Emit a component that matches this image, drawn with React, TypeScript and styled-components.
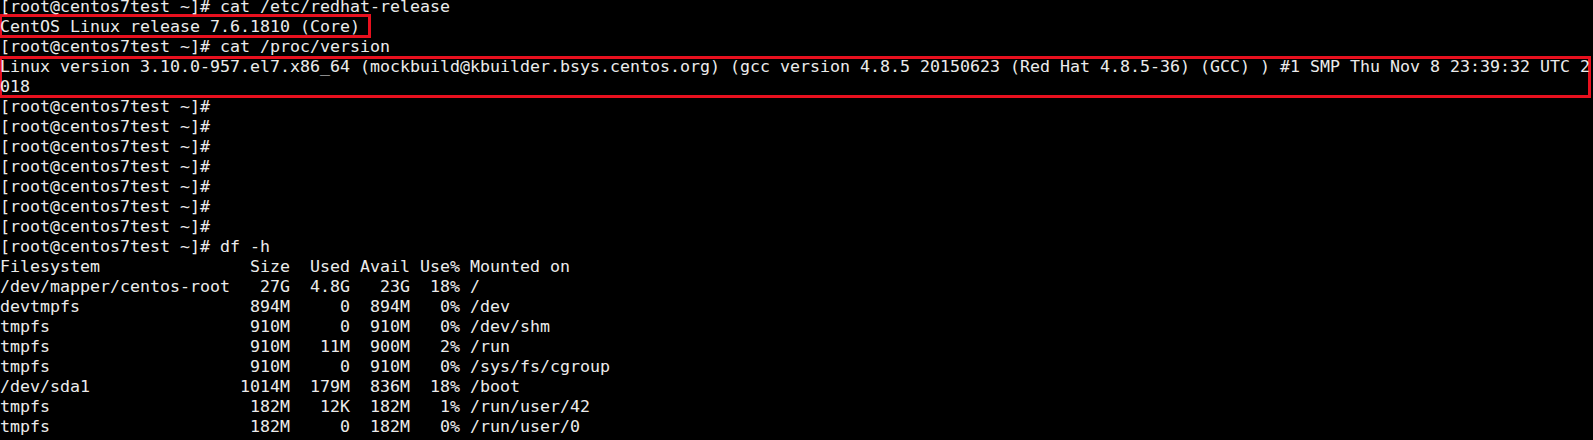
import React from "react";
import styled, { createGlobalStyle } from "styled-components";

const GlobalStyle = createGlobalStyle`
  html, body {
    margin: 0;
    padding: 0;
    background: #000000;
    overflow: hidden;
  }
`;

const Screen = styled.div`
  width: 1593px;
  height: 440px;
  background: #000000;
  overflow: hidden;
`;

const Output = styled.div`
  margin-top: -3px;
  display: flex;
  flex-direction: column;
  font-family: "DejaVu Sans Mono", "Liberation Mono", monospace;
  font-size: 16.61px;
  line-height: 20px;
  color: #ebebeb;
`;

const Line = styled.div`
  position: relative;
  z-index: 1;
  white-space: pre;
  height: 20px;
`;

const Highlight = styled.div<{ $boxWidth: string; $top: number; $bottom: number }>`
  position: relative;
  display: flex;
  flex-direction: column;

  &::after {
    content: "";
    position: absolute;
    z-index: 0;
    left: 0;
    top: ${(p) => p.$top}px;
    bottom: ${(p) => p.$bottom}px;
    width: ${(p) => p.$boxWidth};
    border: 3px solid #e8101e;
    border-left-width: 2px;
    box-sizing: border-box;
    pointer-events: none;
  }
`;

const PROMPT = "[root@centos7test ~]#";

const dfLines = [
  "Filesystem               Size  Used Avail Use% Mounted on",
  "/dev/mapper/centos-root   27G  4.8G   23G  18% /",
  "devtmpfs                 894M     0  894M   0% /dev",
  "tmpfs                    910M     0  910M   0% /dev/shm",
  "tmpfs                    910M   11M  900M   2% /run",
  "tmpfs                    910M     0  910M   0% /sys/fs/cgroup",
  "/dev/sda1               1014M  179M  836M  18% /boot",
  "tmpfs                    182M   12K  182M   1% /run/user/42",
  "tmpfs                    182M     0  182M   0% /run/user/0",
];

export default function App() {
  return (
    <>
      <GlobalStyle />
      <Screen>
        <Output>
          <Line>{PROMPT} cat /etc/redhat-release</Line>
          <Highlight $boxWidth="371px" $top={-3} $bottom={-1}>
            <Line>CentOS Linux release 7.6.1810 (Core)</Line>
          </Highlight>
          <Line>{PROMPT} cat /proc/version</Line>
          <Highlight $boxWidth="1591px" $top={-1} $bottom={-1}>
            <Line>
              Linux version 3.10.0-957.el7.x86_64 (mockbuild@kbuilder.bsys.centos.org) (gcc version 4.8.5 20150623 (Red Hat 4.8.5-36) (GCC) ) #1 SMP Thu Nov 8 23:39:32 UTC 2
            </Line>
            <Line>018</Line>
          </Highlight>
          {Array.from({ length: 7 }).map((_, i) => (
            <Line key={i}>{PROMPT}</Line>
          ))}
          <Line>{PROMPT} df -h</Line>
          {dfLines.map((l, i) => (
            <Line key={`df-${i}`}>{l}</Line>
          ))}
        </Output>
      </Screen>
    </>
  );
}
